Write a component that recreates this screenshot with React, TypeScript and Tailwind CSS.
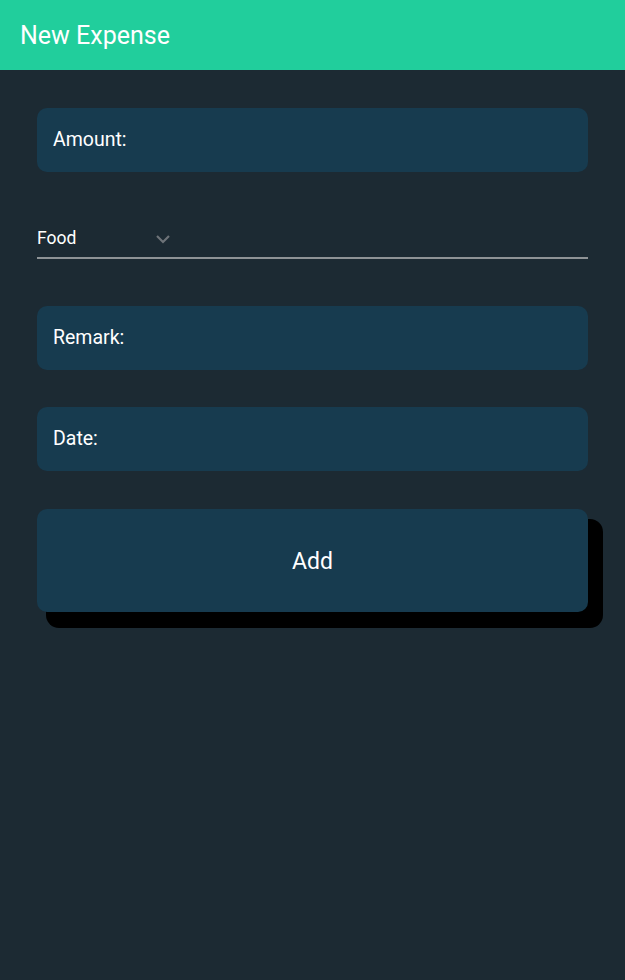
import React from "react";

function Field({ label }: { label: string }) {
  return (
    <div className="h-[64px] rounded-[10px] bg-[#173b4f] flex items-center px-[16px] text-white text-[19.5px]">
      {label}
    </div>
  );
}

export default function App() {
  return (
    <div className="w-[625px] h-[980px] bg-[#1c2a33]" style={{ fontFamily: "Roboto, 'Liberation Sans', sans-serif" }}>
      <div className="h-[70px] bg-[#21ce9c] flex items-center px-[20px] pt-[2px] text-white text-[25px]">
        New Expense
      </div>
      <div className="px-[37px] pt-[38px] flex flex-col">
        <Field label="Amount:" />
        <div className="mt-[52px] h-[35px] pb-[4px] border-b-2 border-[#8e9396] flex items-center">
          <span className="text-white text-[17.5px] w-[118px]">Food</span>
          <svg width="16" height="10" viewBox="0 0 16 10" className="mt-[1px]">
            <path d="M2 2 L8 8 L14 2" stroke="#6d7378" strokeWidth="2.2" fill="none" />
          </svg>
        </div>
        <div className="mt-[47px]">
          <Field label="Remark:" />
        </div>
        <div className="mt-[37px]">
          <Field label="Date:" />
        </div>
        <div className="mt-[38px] h-[103px] pt-[3px] rounded-[10px] bg-[#173b4f] flex items-center justify-center text-white text-[23px] shadow-[12px_13px_0_3px_#000]">
          Add
        </div>
      </div>
    </div>
  );
}
